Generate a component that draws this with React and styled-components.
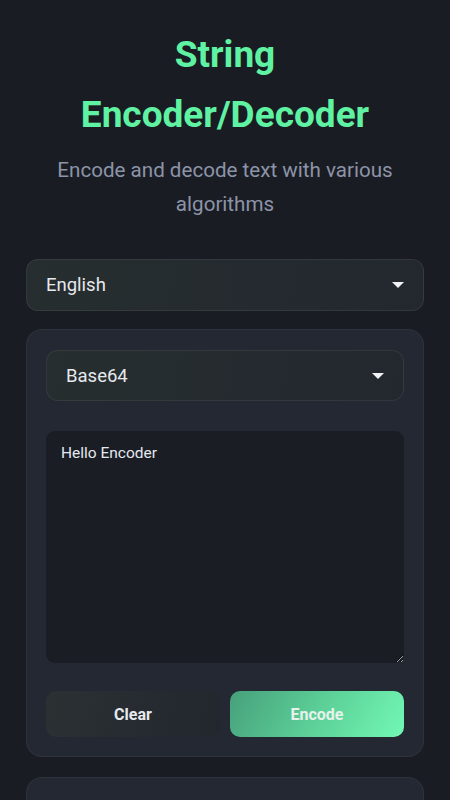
import React, { useState } from "react";
import styled, { createGlobalStyle } from "styled-components";

const Global = createGlobalStyle`
  html { scrollbar-width: none; background: #1a1c23; }
  html::-webkit-scrollbar { width: 0; height: 0; }
  body {
    margin: 0;
    background: #1a1c23;
    font-family: Roboto, "Noto Sans", "Liberation Sans", sans-serif;
    color: #e2e8f0;
  }
  * { box-sizing: border-box; }
`;

const Page = styled.main`
  padding: 25px 26px 40px;
  display: flex;
  flex-direction: column;
`;

const Title = styled.h1`
  margin: 0;
  text-align: center;
  font-size: 37px;
  line-height: 60px;
  font-weight: 700;
  color: #5ff2a2;
`;

const Subtitle = styled.p`
  margin: 8px 0 38px;
  text-align: center;
  font-size: 20.6px;
  line-height: 34px;
  color: #8c94a8;
`;

const SelectWrap = styled.div`
  position: relative;
  margin-bottom: ${(p) => p.$gap || 0}px;
  &::after {
    content: "";
    position: absolute;
    right: 20px;
    top: 50%;
    margin-top: -3px;
    border-left: 6px solid transparent;
    border-right: 6px solid transparent;
    border-top: 6px solid #f1f3f6;
    pointer-events: none;
  }
`;

const Select = styled.select`
  appearance: none;
  -webkit-appearance: none;
  width: 100%;
  height: ${(p) => p.$h || 52}px;
  padding: 0 44px 0 19px;
  border-radius: 12px;
  border: 1px solid rgba(255, 255, 255, 0.07);
  background: linear-gradient(100deg, #272e2f 0%, #242a2f 60%, #23282f 100%);
  color: #e6e9ee;
  font-family: Roboto, "Noto Sans", sans-serif;
  font-size: 18.5px;
  outline: none;
`;

const Card = styled.section`
  background: #232833;
  border: 1px solid rgba(255, 255, 255, 0.05);
  border-radius: 16px;
  padding: 20px 19px 19px;
  min-height: ${(p) => p.$min || 0}px;
  margin-top: ${(p) => p.$mt || 0}px;
  display: flex;
  flex-direction: column;
`;

const TextArea = styled.textarea`
  width: 100%;
  height: 232px;
  resize: vertical;
  background: #1b1d24;
  border: none;
  border-radius: 9px;
  padding: 11px 15px;
  color: #e2e8f0;
  font-family: Roboto, "Noto Sans", sans-serif;
  font-size: 15.5px;
  line-height: 1.45;
  outline: none;
  color-scheme: dark;
`;

const Buttons = styled.div`
  display: grid;
  grid-template-columns: 1fr 1fr;
  gap: 10px;
  margin-top: 28px;
`;

const Button = styled.button`
  height: 46px;
  border: none;
  border-radius: 10px;
  font-family: Roboto, "Noto Sans", sans-serif;
  font-size: 16px;
  font-weight: 700;
  color: ${(p) => (p.$primary ? "#e7f2ec" : "#e6e9ee")};
  background: ${(p) =>
    p.$primary
      ? "linear-gradient(120deg, #47a07b 0%, #5ccf97 50%, #72f8b5 100%)"
      : "linear-gradient(110deg, #2b3133 0%, #262b31 55%, #22272e 100%)"};
  cursor: pointer;
`;

export default function App() {
  const [text, setText] = useState("Hello Encoder");
  return (
    <>
      <Global />
      <Page>
        <Title>
          String
          <br />
          Encoder/Decoder
        </Title>
        <Subtitle>Encode and decode text with various algorithms</Subtitle>
        <SelectWrap $gap={18}>
          <Select defaultValue="en">
            <option value="en">English</option>
          </Select>
        </SelectWrap>
        <Card>
          <SelectWrap $gap={30}>
            <Select $h={51} defaultValue="b64">
              <option value="b64">Base64</option>
            </Select>
          </SelectWrap>
          <TextArea value={text} onChange={(e) => setText(e.target.value)} />
          <Buttons>
            <Button onClick={() => setText("")}>Clear</Button>
            <Button $primary>Encode</Button>
          </Buttons>
        </Card>
        <Card $mt={20} $min={160} />
      </Page>
    </>
  );
}
